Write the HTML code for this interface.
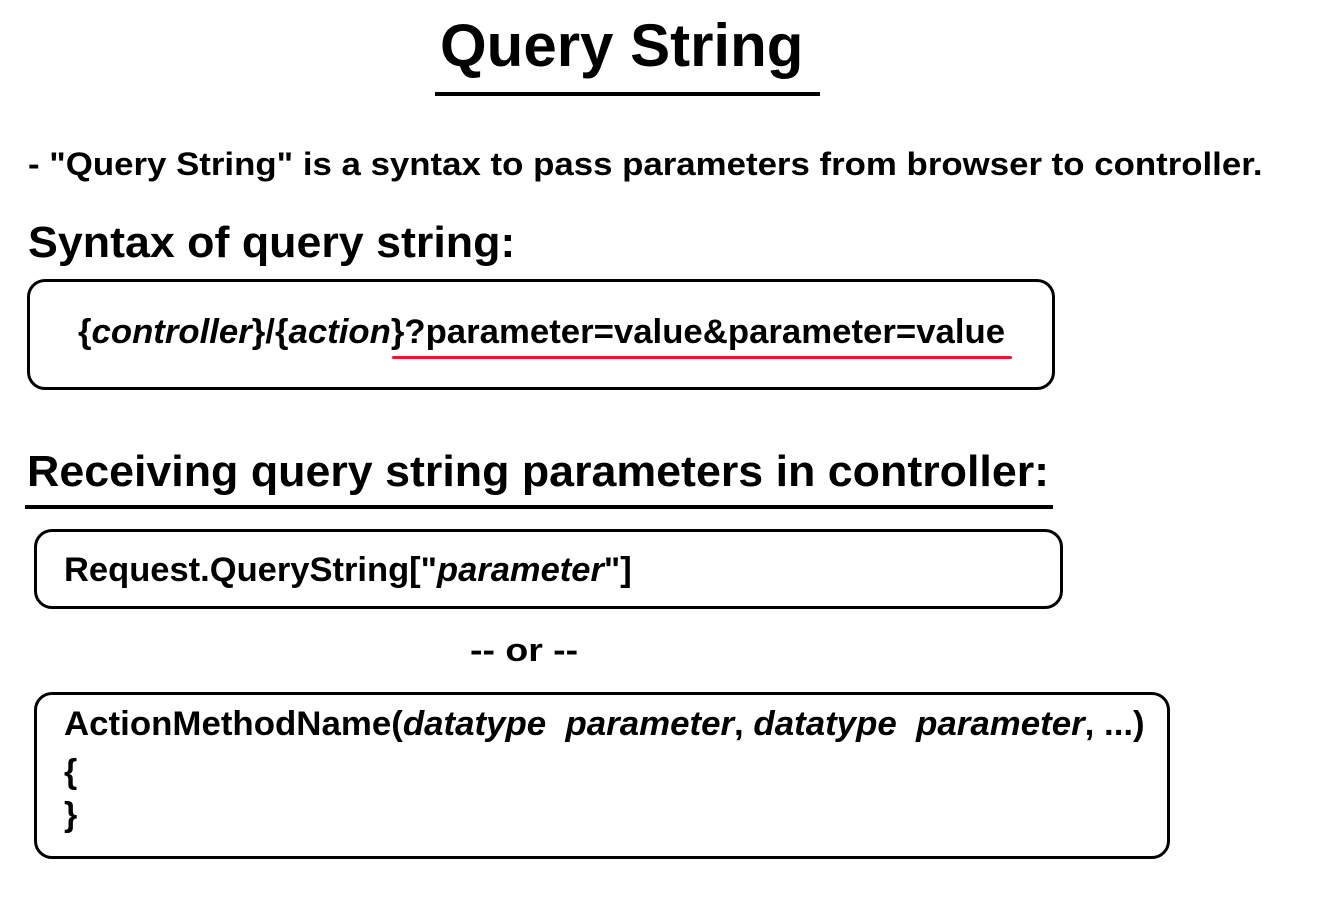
<!DOCTYPE html>
<html><head><meta charset="utf-8"><style>
body{margin:0;width:1330px;height:900px;background:#fff;position:relative;overflow:hidden;font-family:"Liberation Sans",sans-serif;font-weight:bold;color:#000}
.t{position:absolute;white-space:nowrap;transform-origin:left center;line-height:1}
.box{position:absolute;border:3px solid #000;border-radius:18px;box-sizing:border-box}
.line{position:absolute;background:#000}
i{font-style:italic}
</style></head><body>
<div class="t" style="left:440px;top:16px;font-size:60px;transform:scaleX(1.0)">Query String</div>
<div class="line" style="left:435px;top:92px;width:385px;height:4px"></div>
<div class="t" style="left:28px;top:148px;font-size:32px;transform:scaleX(1.088)">- "Query String" is a syntax to pass parameters from browser to controller.</div>
<div class="t" style="left:28px;top:221px;font-size:44px;transform:scaleX(1.017)">Syntax of query string:</div>
<div class="box" style="left:27px;top:279px;width:1028px;height:111px"></div>
<div class="t" style="left:78px;top:315px;font-size:34px;transform:scaleX(1.022)">{<i>controller</i>}/{<i>action</i>}?parameter=value&amp;parameter=value</div>
<div class="line" style="left:392px;top:356px;width:620px;height:3px;background:#e8192c;border-radius:2px"></div>
<div class="t" style="left:27px;top:450px;font-size:44px;transform:scaleX(1.017)">Receiving query string parameters in controller:</div>
<div class="line" style="left:25px;top:505px;width:1028px;height:4px"></div>
<div class="box" style="left:34px;top:529px;width:1029px;height:80px"></div>
<div class="t" style="left:64px;top:553px;font-size:34px;transform:scaleX(1.015)">Request.QueryString["<i>parameter</i>"]</div>
<div class="t" style="left:470px;top:634px;font-size:32px;transform:scaleX(1.17)">-- or --</div>
<div class="box" style="left:34px;top:692px;width:1136px;height:167px"></div>
<div class="t" style="left:64px;top:707px;font-size:34px;transform:scaleX(1.025)">ActionMethodName(<i>datatype&nbsp; parameter</i>, <i>datatype&nbsp; parameter</i>, ...)</div>
<div class="t" style="left:64px;top:755px;font-size:34px">{</div>
<div class="t" style="left:64px;top:798px;font-size:34px">}</div>
</body></html>
